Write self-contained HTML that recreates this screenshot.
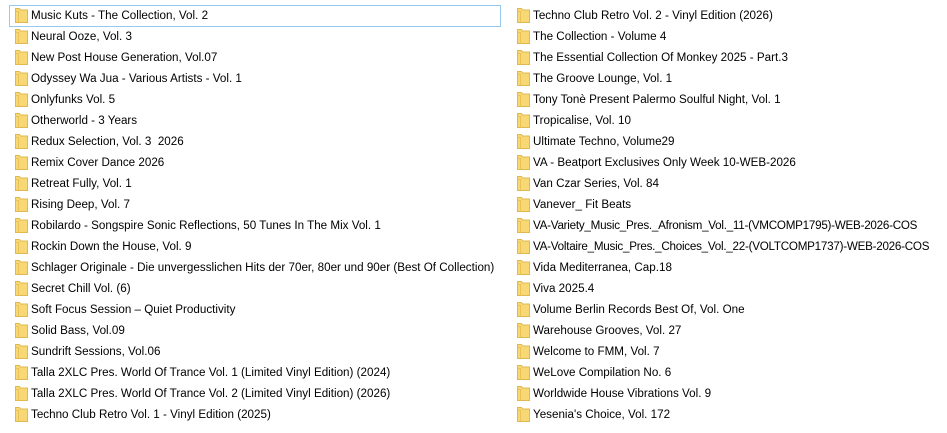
<!DOCTYPE html><html><head><style>
body{margin:0;width:947px;height:433px;background:#fff;overflow:hidden;font-family:"Liberation Sans",sans-serif;font-size:11.65px;color:#000;position:relative}
.r{position:absolute;height:21px;line-height:21px;white-space:pre}
.i{position:absolute;left:0;top:3px;width:13px;height:15px}
.t{position:absolute;left:16px;top:0}
.sel{position:absolute;left:9px;top:5px;width:490px;height:20px;border:1px solid #99c9ef}
</style></head><body>
<div class="sel"></div>
<div id="c"></div>
<script>
var L=["Music Kuts - The Collection, Vol. 2","Neural Ooze, Vol. 3","New Post House Generation, Vol.07","Odyssey Wa Jua - Various Artists - Vol. 1","Onlyfunks Vol. 5","Otherworld - 3 Years","Redux Selection, Vol. 3  2026","Remix Cover Dance 2026","Retreat Fully, Vol. 1","Rising Deep, Vol. 7","Robilardo - Songspire Sonic Reflections, 50 Tunes In The Mix Vol. 1","Rockin Down the House, Vol. 9","Schlager Originale - Die unvergesslichen Hits der 70er, 80er und 90er (Best Of Collection)","Secret Chill Vol. (6)","Soft Focus Session \u2013 Quiet Productivity","Solid Bass, Vol.09","Sundrift Sessions, Vol.06","Talla 2XLC Pres. World Of Trance Vol. 1 (Limited Vinyl Edition) (2024)","Talla 2XLC Pres. World Of Trance Vol. 2 (Limited Vinyl Edition) (2026)","Techno Club Retro Vol. 1 - Vinyl Edition (2025)"];
var R=["Techno Club Retro Vol. 2 - Vinyl Edition (2026)","The Collection - Volume 4","The Essential Collection Of Monkey 2025 - Part.3","The Groove Lounge, Vol. 1","Tony Ton\u00e8 Present Palermo Soulful Night, Vol. 1","Tropicalise, Vol. 10","Ultimate Techno, Volume29","VA - Beatport Exclusives Only Week 10-WEB-2026","Van Czar Series, Vol. 84","Vanever_ Fit Beats","VA-Variety_Music_Pres._Afronism_Vol._11-(VMCOMP1795)-WEB-2026-COS","VA-Voltaire_Music_Pres._Choices_Vol._22-(VOLTCOMP1737)-WEB-2026-COS","Vida Mediterranea, Cap.18","Viva 2025.4","Volume Berlin Records Best Of, Vol. One","Warehouse Grooves, Vol. 27","Welcome to FMM, Vol. 7","WeLove Compilation No. 6","Worldwide House Vibrations Vol. 9","Yesenia's Choice, Vol. 172"];
var ic='<svg class="i" viewBox="0 0 13 15"><path d="M0.5 0.5h4l1 1.5h7v12.5h-12z" fill="#f8d775" stroke="#e0b94e"/><path d="M0.5 3.5h3v11" fill="none" stroke="#e8c35a"/></svg>';
var h='';
function add(a,x){a.forEach(function(s,k){var ls=s.indexOf('VA-V')==0?'letter-spacing:-0.25px':'';h+='<div class="r" style="left:'+x+'px;top:'+(5+k*21)+'px">'+ic+'<span class="t" style="'+ls+'">'+s.replace(/&/g,'&amp;')+'</span></div>';});}
add(L,15);add(R,517);
document.getElementById('c').innerHTML=h;
</script>
</body></html>
